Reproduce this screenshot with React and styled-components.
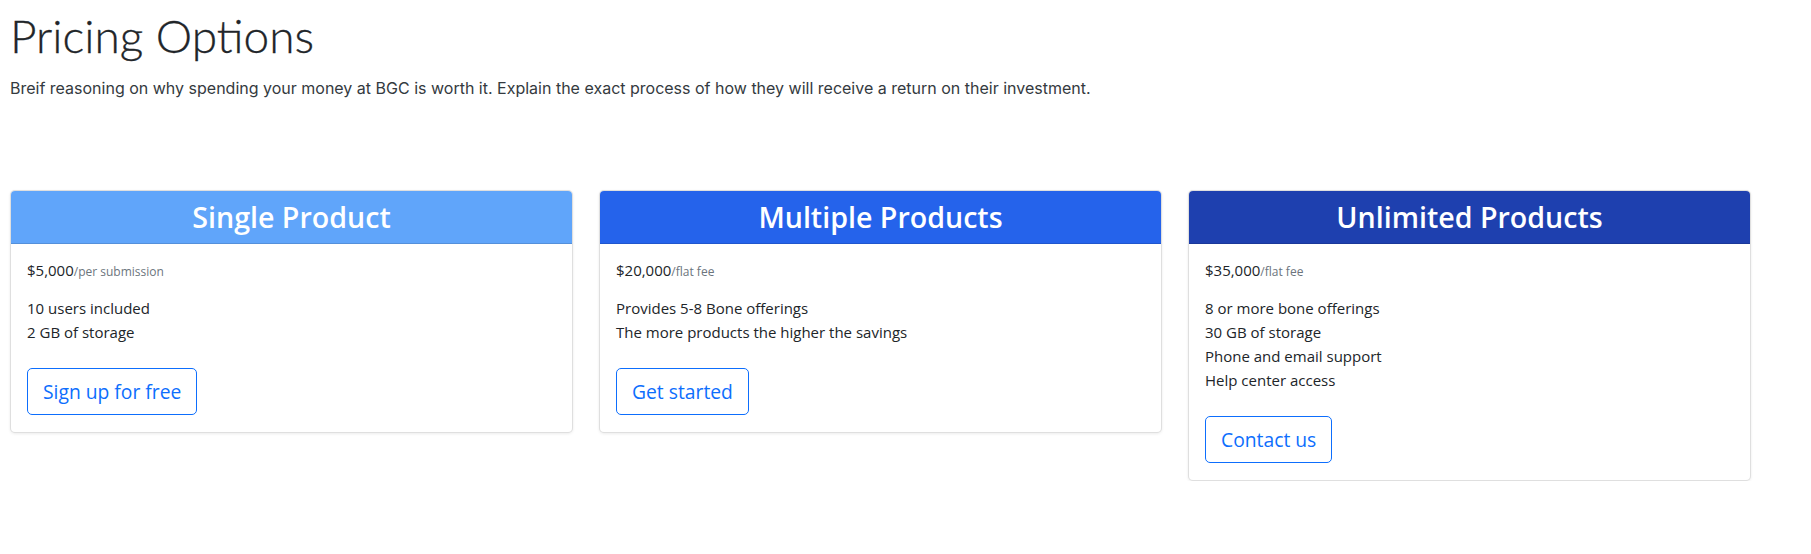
import React from 'react';
import styled, { createGlobalStyle } from 'styled-components';

const plans = [
  {
    title: 'Single Product',
    color: '#60a5fa',
    price: '$5,000',
    unit: '/per submission',
    features: ['10 users included', '2 GB of storage'],
    action: 'Sign up for free',
  },
  {
    title: 'Multiple Products',
    color: '#2563eb',
    price: '$20,000',
    unit: '/flat fee',
    features: ['Provides 5-8 Bone offerings', 'The more products the higher the savings'],
    action: 'Get started',
  },
  {
    title: 'Unlimited Products',
    color: '#1e40af',
    price: '$35,000',
    unit: '/flat fee',
    features: ['8 or more bone offerings', '30 GB of storage', 'Phone and email support', 'Help center access'],
    action: 'Contact us',
  },
];

const GlobalStyle = createGlobalStyle`
  body {
    margin: 0;
    background: #fff;
    color: #212529;
    font-family: "Open Sans", "Noto Sans", sans-serif;
  }
`;

const Page = styled.main`
  padding: 8px 10px 0 10px;
`;

const Title = styled.h1`
  margin: 0;
  font-family: Lato, sans-serif;
  font-weight: 300;
  font-size: 46px;
  line-height: 1.2;
  color: #212529;
  -webkit-text-stroke: 0.3px #212529;
`;

const Lead = styled.p`
  margin: 13px 0 0;
  font-family: Inter, sans-serif;
  font-size: 16px;
  line-height: 24px;
  color: #343a40;
`;

const Grid = styled.div`
  display: grid;
  grid-template-columns: repeat(3, 1fr);
  gap: 26px;
  width: 1741px;
  margin-top: 90px;
  align-items: start;
`;

const Card = styled.section`
  background: #fff;
  border: 1px solid rgba(0, 0, 0, 0.125);
  border-radius: 5px;
  box-shadow: 0 1px 3px rgba(0, 0, 0, 0.08);
  overflow: hidden;
`;

const Header = styled.header`
  background: ${p => p.$color};
  border-bottom: 1px solid rgba(0, 0, 0, 0.125);
  padding: 9px 16px;
  text-align: center;
`;

const PlanName = styled.h3`
  margin: 0;
  color: #fff;
  font-size: 28.6px;
  font-weight: 600;
  line-height: 34px;
`;

const Body = styled.div`
  padding: 16px 16px 17px;
`;

const Price = styled.div`
  font-size: 15px;
  line-height: 20px;
  margin-bottom: 14px;
`;

const Unit = styled.small`
  font-size: 12px;
  color: #6c757d;
`;

const Features = styled.ul`
  list-style: none;
  margin: 0 0 24px;
  padding: 0;
  font-size: 15px;
  line-height: 24px;
`;

const OutlineButton = styled.button`
  font-family: inherit;
  font-size: 19.3px;
  line-height: 29px;
  padding: 8px 15px;
  color: #0d6efd;
  background: transparent;
  border: 1px solid #0d6efd;
  border-radius: 5px;
  cursor: pointer;
`;

export default function App() {
  return (
    <>
      <GlobalStyle />
      <Page>
        <Title>Pricing Options</Title>
        <Lead>
          Breif reasoning on why spending your money at BGC is worth it. Explain the exact process of how they will receive a return on their investment.
        </Lead>
        <Grid>
          {plans.map(plan => (
            <Card key={plan.title}>
              <Header $color={plan.color}>
                <PlanName>{plan.title}</PlanName>
              </Header>
              <Body>
                <Price>
                  {plan.price}
                  <Unit>{plan.unit}</Unit>
                </Price>
                <Features>
                  {plan.features.map(f => (
                    <li key={f}>{f}</li>
                  ))}
                </Features>
                <OutlineButton type="button">{plan.action}</OutlineButton>
              </Body>
            </Card>
          ))}
        </Grid>
      </Page>
    </>
  );
}
